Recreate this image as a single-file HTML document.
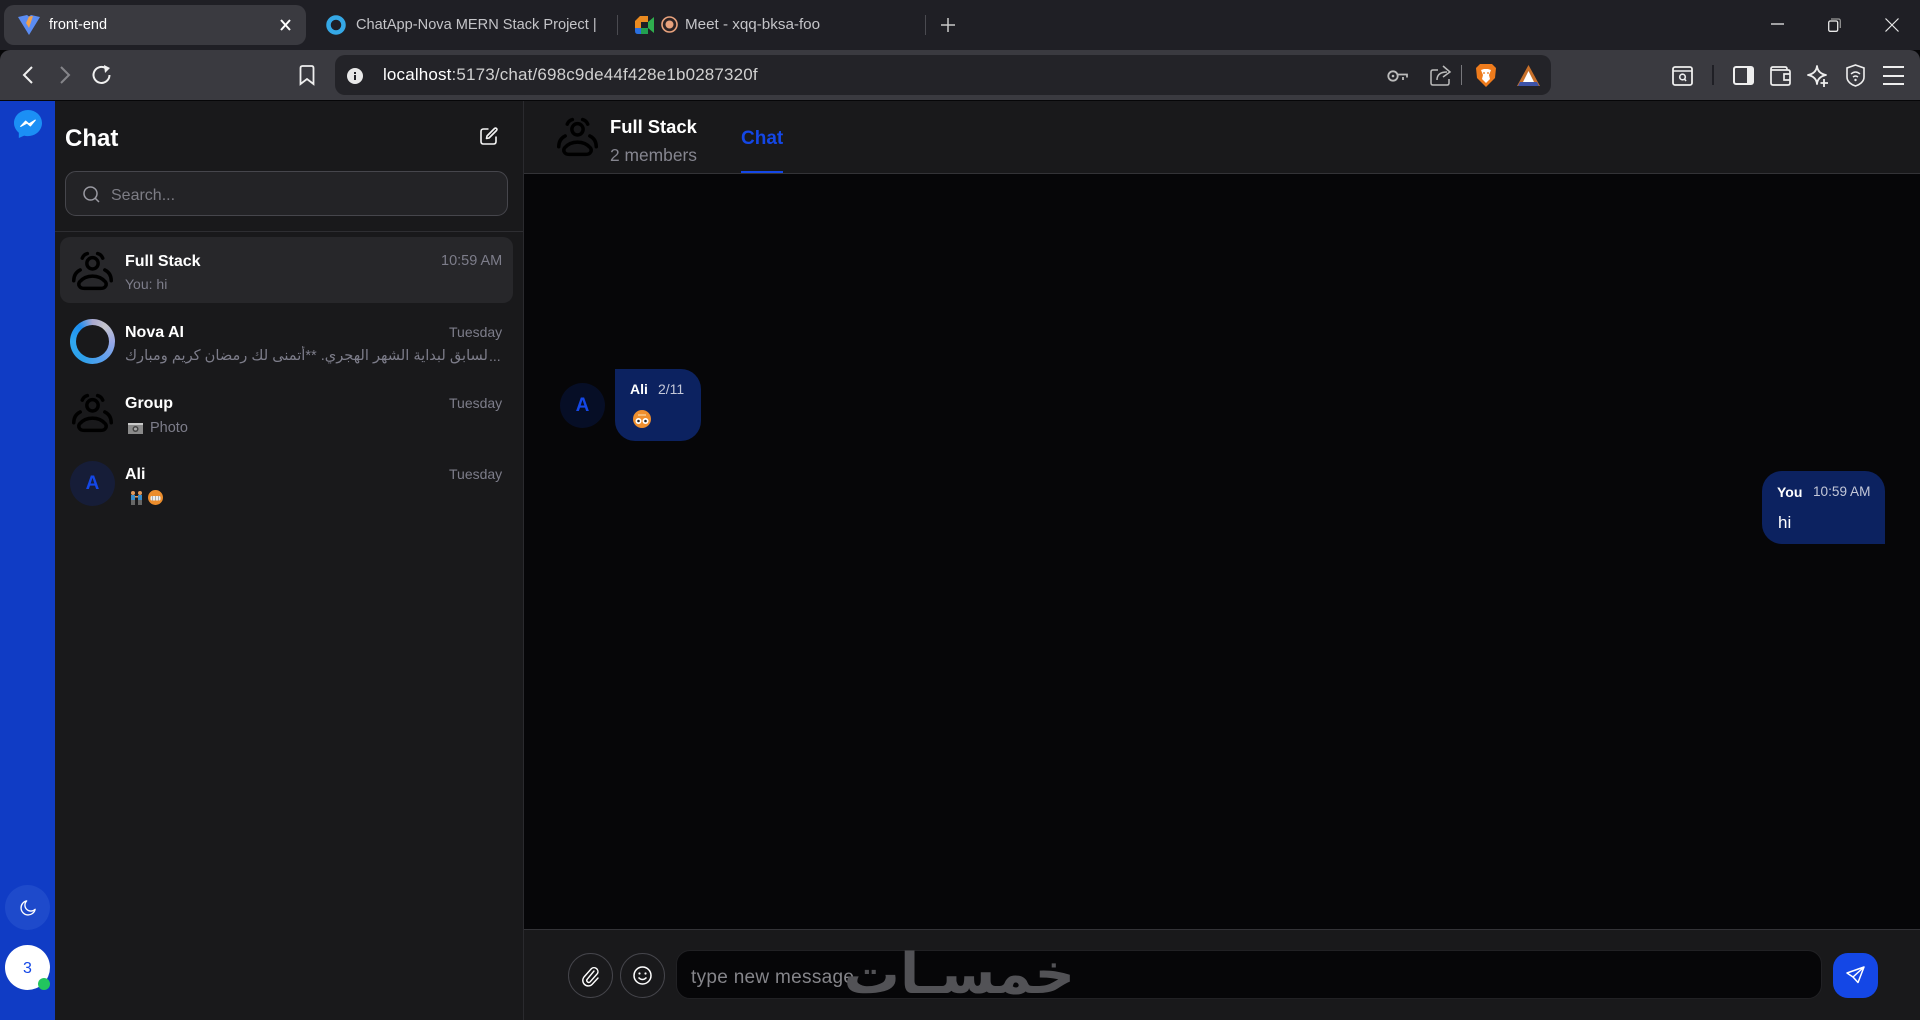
<!DOCTYPE html>
<html><head><meta charset="utf-8"><title>front-end</title>
<style>
*{box-sizing:border-box;margin:0;padding:0}
html,body{width:1920px;height:1020px;overflow:hidden;background:#060608;font-family:"Liberation Sans","DejaVu Sans",sans-serif;color:#fff}
.a{position:absolute}
.t{position:absolute;white-space:nowrap;line-height:20px;height:20px}
svg{position:absolute;overflow:visible}
.b{font-weight:700;color:#fff}
.g{color:#7d7d8a;font-size:14px}
</style></head><body>
<!-- browser chrome -->
<div class="a" style="left:0;top:0;width:1920px;height:50px;background:#1f1f25"></div>
<div class="a" style="left:4px;top:5px;width:302px;height:40px;background:#3a3a40;border-radius:10px"></div>
<div class="a" style="left:0;top:50px;width:1920px;height:50px;background:#3a3a40;border-radius:10px 10px 0 0"></div>
<div class="a" style="left:335px;top:55px;width:1216px;height:40px;background:#232328;border-radius:10px"></div>
<svg style="left:18px;top:15px" width="22" height="20" viewBox="0 0 22 20"><path d="M0 2 L9 0 L11 1.5 L13 0 L22 2 L11 20Z" fill="#5b8cf2"/><path d="M11 1.5 L15 1 L11 13 L8 8Z" fill="#f0a04b"/></svg>
<div class="t" style="left:49px;top:15px;font-size:14.5px;color:#fff">front-end</div>
<svg style="left:280px;top:19px" width="11" height="12" viewBox="0 0 11 12"><path d="M1 1L10 11M10 1L1 11" stroke="#fff" stroke-width="2"/></svg>
<svg style="left:326px;top:15px" width="20" height="20" viewBox="0 0 20 20"><circle cx="10" cy="10" r="7.5" fill="none" stroke="#35a8e6" stroke-width="4.5"/></svg>
<div class="t" style="left:356px;top:15px;width:241px;overflow:hidden;font-size:14.6px;color:#c4c4c8">ChatApp-Nova MERN Stack Project |</div>
<div class="a" style="left:617px;top:15px;width:1px;height:20px;background:#4a4a50"></div>
<svg style="left:635px;top:15px" width="19" height="20" viewBox="0 0 19 20"><path d="M0 6L5 1H13V7H6V13H0Z" fill="#ea8a20"/><path d="M0 13H6V19H3Q0 19 0 16Z" fill="#2a6fe0"/><path d="M6 13H13V19H6Z" fill="#22a050"/><path d="M13 7L19 2V18L13 13Z" fill="#2fae4e"/></svg>
<svg style="left:661px;top:16px" width="17" height="17" viewBox="0 0 17 17"><circle cx="8.5" cy="8.5" r="7.5" fill="#2b2224" stroke="#e8a27d" stroke-width="1.6"/><circle cx="8.5" cy="8.5" r="4" fill="#e8a27d"/></svg>
<div class="t" style="left:685px;top:15px;font-size:15.2px;color:#c4c4c8">Meet - xqq-bksa-foo</div>
<div class="a" style="left:925px;top:15px;width:1px;height:20px;background:#4a4a50"></div>
<svg style="left:941px;top:18px" width="14" height="14" viewBox="0 0 14 14"><path d="M7 0V14M0 7H14" stroke="#c8c8c8" stroke-width="1.5"/></svg>
<svg style="left:1771px;top:23px" width="13" height="2"><path d="M0 1H13" stroke="#e8e8e8" stroke-width="1.3"/></svg>
<svg style="left:1828px;top:18px" width="13" height="14" viewBox="0 0 13 14"><rect x=".7" y="3" width="9" height="10.3" rx="1.5" fill="none" stroke="#e8e8e8" stroke-width="1.3"/><path d="M3 1H10.5Q12.3 1 12.3 3V10" fill="none" stroke="#999" stroke-width="1.2"/></svg>
<svg style="left:1885px;top:18px" width="14" height="14" viewBox="0 0 14 14"><path d="M.5.5L13.5 13.5M13.5.5L.5 13.5" stroke="#e8e8e8" stroke-width="1.2"/></svg>
<svg style="left:22px;top:66px" width="11" height="18" viewBox="0 0 11 18"><path d="M10 1L2 9L10 17" fill="none" stroke="#f0f0f0" stroke-width="2"/></svg>
<svg style="left:60px;top:66px" width="11" height="18" viewBox="0 0 11 18"><path d="M1 1L9 9L1 17" fill="none" stroke="#85858a" stroke-width="2"/></svg>
<svg style="left:92px;top:65px" width="21" height="20" viewBox="0 0 21 20"><path d="M17.5 10a8 8 0 1 1-4-7" fill="none" stroke="#f0f0f0" stroke-width="2"/><path d="M12 0L18 3L13 8Z" fill="#f0f0f0"/></svg>
<svg style="left:299px;top:65px" width="16" height="20" viewBox="0 0 16 20"><path d="M1.5 3Q1.5 1 3.5 1H12.500Q14.500 1 14.500 3V19L8 14L1.500 19Z" fill="none" stroke="#efefef" stroke-width="1.800"/></svg>
<svg style="left:347px;top:68px" width="16" height="16" viewBox="0 0 16 16"><circle cx="8" cy="8" r="8" fill="#e8e8e8"/><rect x="7" y="7" width="2" height="5" fill="#232328"/><rect x="7" y="4" width="2" height="2" fill="#232328"/></svg>
<div class="t" style="left:383px;top:65px;font-size:17px;letter-spacing:.16px;color:#d0d0d0"><span style="color:#fff">localhost</span>:5173/chat/698c9de44f428e1b0287320f</div>
<svg style="left:1387px;top:69px" width="21" height="14" viewBox="0 0 21 14"><circle cx="6" cy="7" r="4.700" fill="none" stroke="#bbb" stroke-width="1.800"/><circle cx="6" cy="7" r="1.300" fill="#bbb"/><path d="M11 5.500H20V8.500M16 8V11" fill="none" stroke="#bbb" stroke-width="1.800"/></svg>
<svg style="left:1430px;top:65px" width="22" height="21" viewBox="0 0 22 21"><path d="M8 5H3Q1 5 1 7V18Q1 20 3 20H17Q19 20 19 18V14" fill="none" stroke="#bbb" stroke-width="1.500"/><path d="M7 15C7 9 11 7 17 7M13 1L20 7L13 12" fill="none" stroke="#bbb" stroke-width="1.500"/></svg>
<div class="a" style="left:1461px;top:65px;width:1px;height:20px;background:#77777c"></div>
<svg style="left:1476px;top:64px" width="20" height="23" viewBox="0 0 20 23"><path d="M4 0H16L20 4L19 14L10 23L1 14L0 4Z" fill="#ee7b1c"/><path d="M5 6L8 5H12L15 6L13 11L14 15L10 19L6 15L7 11Z" fill="#fff"/><path d="M7 9H9M11 9H13" stroke="#ee7b1c" stroke-width="1.200"/></svg>
<svg style="left:1517px;top:65px" width="23" height="21" viewBox="0 0 23 21"><path d="M11.500 0L23 21H0Z" fill="#c8702a"/><path d="M11.500 6L17 17H6Z" fill="#fff"/><path d="M3 17H20L22 21H1Z" fill="#3d53a8"/></svg>
<svg style="left:1672px;top:66px" width="21" height="20" viewBox="0 0 21 20"><rect x="1" y="1" width="19" height="18" rx="2" fill="none" stroke="#eee" stroke-width="1.800"/><path d="M1 5H20" stroke="#eee" stroke-width="1.500"/><circle cx="10.500" cy="11" r="2.800" fill="none" stroke="#eee" stroke-width="1.600"/><path d="M12.500 13L14 15" stroke="#eee" stroke-width="1.600"/></svg>
<div class="a" style="left:1712px;top:65px;width:2px;height:20px;background:#1f1f25"></div>
<svg style="left:1733px;top:66px" width="21" height="19" viewBox="0 0 21 19"><rect x="1" y="1" width="19" height="17" rx="2" fill="none" stroke="#eee" stroke-width="2"/><rect x="14" y="1" width="6" height="17" fill="#eee"/></svg>
<svg style="left:1770px;top:66px" width="21" height="20" viewBox="0 0 21 20"><path d="M17 4V3Q17 1 15 1H3Q1 1 1 3V17Q1 19 3 19H18Q20 19 20 17V6Q20 4 18 4H1" fill="none" stroke="#eee" stroke-width="1.700"/><path d="M20 8H14V14H20" fill="none" stroke="#eee" stroke-width="1.700"/></svg>
<svg style="left:1807px;top:65px" width="22" height="22" viewBox="0 0 22 22"><path d="M10 1C10.500 6 14 9 19 10C14 11 10.500 14 10 19C9.500 14 6 11 1 10C6 9 9.500 6 10 1Z" fill="none" stroke="#eee" stroke-width="1.800" stroke-linejoin="round"/><path d="M17 14V22M13.500 18H21" stroke="#eee" stroke-width="1.800"/></svg>
<svg style="left:1846px;top:64px" width="19" height="23" viewBox="0 0 19 23"><path d="M9.500 1L18 4V13C18 18 13 21 9.500 22C6 21 1 18 1 13V4Z" fill="none" stroke="#eee" stroke-width="1.600"/><path d="M5 10Q9.500 6 14 10M7 13Q9.500 11 12 13" fill="none" stroke="#eee" stroke-width="1.500"/><circle cx="9.500" cy="16" r="1.200" fill="#eee"/></svg>
<svg style="left:1883px;top:66px" width="21" height="19" viewBox="0 0 21 19"><path d="M0 1H21M0 10H21M0 18H21" stroke="#eee" stroke-width="2"/></svg>

<!-- left blue rail -->
<div class="a" style="left:0;top:101px;width:55px;height:919px;background:#103cc5"></div>
<svg style="left:14px;top:110px" width="28" height="28" viewBox="0 0 29 29"><path d="M14.500 0C6.500 0 0 6 0 13.500C0 17.500 2 21 5 23.500V29L10.500 26.500C11.800 26.800 13 27 14.500 27C22.500 27 29 21 29 13.500S22.500 0 14.500 0Z" fill="#1b8ff5"/><path d="M7 17L12 11.500L15.500 14.500L22 10.500L17 16.500L13.500 13.500Z" fill="#fff" stroke="#fff" stroke-width="1.200" stroke-linejoin="round"/></svg>
<div class="a" style="left:5px;top:885px;width:45px;height:45px;border-radius:50%;background:#1e4acb"></div>
<svg style="left:20px;top:900px" width="16" height="16" viewBox="0 0 18 18"><path d="M7.500 1A8 8 0 1 0 17 10.500A6.500 6.500 0 0 1 7.500 1Z" fill="none" stroke="#fff" stroke-width="1.500" stroke-linejoin="round"/></svg>
<div class="a" style="left:5px;top:945px;width:45px;height:45px;border-radius:50%;background:#fff"></div>
<div class="t" style="left:5px;width:45px;text-align:center;top:959px;font-size:16px;color:#1447e6">3</div>
<div class="a" style="left:38px;top:978px;width:12px;height:12px;border-radius:50%;background:#22c55e"></div>

<!-- chat list panel -->
<div class="a" style="left:55px;top:101px;width:469px;height:919px;background:#19191b;border-right:1px solid #2a2a2e"></div>
<div class="t" style="left:65px;top:127px;height:24px;line-height:24px;font-size:24px;font-weight:700;color:#fff">Chat</div>
<svg style="left:480px;top:127px" width="18" height="18" viewBox="0 0 18 18"><path d="M8.500 2H3.500Q1 2 1 4.500V14.500Q1 17 3.500 17H13.500Q16 17 16 14.500V9.500" fill="none" stroke="#f4f4f4" stroke-width="1.600"/><path d="M7 9L14.500 1.500Q15.500.7 16.500 1.500T16.500 3.500L9 11L6.500 11.500Z" fill="none" stroke="#f4f4f4" stroke-width="1.600" stroke-linejoin="round"/></svg>
<div class="a" style="left:65px;top:171px;width:443px;height:45px;border-radius:11px;background:#232326;border:1px solid #46464c"></div>
<svg style="left:83px;top:186px" width="17" height="17" viewBox="0 0 17 17"><circle cx="7.500" cy="7.500" r="6.500" fill="none" stroke="#9a9aa2" stroke-width="1.500"/><path d="M12.300 12.300L16 16" stroke="#9a9aa2" stroke-width="1.500"/></svg>
<div class="t" style="left:111px;top:186px;font-size:16px;color:#7d7d85">Search...</div>
<div class="a" style="left:55px;top:231px;width:468px;height:1px;background:#2e2e32"></div>
<div class="a" style="left:60px;top:237px;width:453px;height:66px;border-radius:10px;background:#27272a"></div>

<!-- row 1 -->
<svg style="left:72px;top:252px" width="41" height="38" viewBox="0 0 40 37"><g fill="none" stroke="#000" stroke-width="3.400" stroke-linecap="round"><circle cx="20" cy="11" r="5.500"/><path d="M12 35.500H28C33 35.500 34.500 31.500 32.500 29C29 25 24 23.500 20 23.500S11 25 7.500 29C5.500 31.500 7 35.500 12 35.500Z"/><path d="M10 6C11 3.500 13 2 15 1.500M30 6C29 3.500 27 2 25 1.500M1.700 28C1.700 23 4 19.500 8 17.500M38.300 28C38.300 23 36 19.500 32 17.500"/></g></svg>
<div class="t b" style="left:125px;top:252px;font-size:16px">Full Stack</div>
<div class="t g" style="left:441px;top:251px;font-size:14.500px">10:59 AM</div>
<div class="t g" style="left:125px;top:274px">You: hi</div>
<!-- row 2 -->
<div class="a" style="left:70px;top:319px;width:45px;height:45px;border-radius:50%;background:conic-gradient(from 0deg,#a9a8d0 0deg,#c6c6cc 40deg,#9aa8e6 90deg,#5aa0ee 150deg,#2da0ea 210deg,#30a8f0 270deg,#1c8ef0 320deg,#a9a8d0 360deg)"></div>
<div class="a" style="left:76px;top:325px;width:33px;height:33px;border-radius:50%;background:#19191b"></div>
<div class="t b" style="left:125px;top:323px;font-size:16px">Nova AI</div>
<div class="t g" style="left:449px;top:322px">Tuesday</div>
<div class="t g" dir="rtl" style="left:125px;top:346px;width:364px;font-size:14.6px;text-align:left;overflow:hidden">لسابق لبداية الشهر الهجري. **أتمنى لك رمضان كريم ومبارك</div>
<div class="t g" style="left:489px;top:346px">...</div>
<!-- row 3 -->
<svg style="left:72px;top:394px" width="41" height="38" viewBox="0 0 40 37"><g fill="none" stroke="#000" stroke-width="3.400" stroke-linecap="round"><circle cx="20" cy="11" r="5.500"/><path d="M12 35.500H28C33 35.500 34.500 31.500 32.500 29C29 25 24 23.500 20 23.500S11 25 7.500 29C5.500 31.500 7 35.500 12 35.500Z"/><path d="M10 6C11 3.500 13 2 15 1.500M30 6C29 3.500 27 2 25 1.500M1.700 28C1.700 23 4 19.500 8 17.500M38.300 28C38.300 23 36 19.500 32 17.500"/></g></svg>
<div class="t b" style="left:125px;top:394px;font-size:16px">Group</div>
<div class="t g" style="left:449px;top:393px">Tuesday</div>
<svg style="left:128px;top:423px" width="15" height="11" viewBox="0 0 15 11"><rect width="15" height="11" fill="#8a8a8a"/><rect y="0" width="15" height="2" fill="#c9c9c9"/><circle cx="7.500" cy="6" r="3" fill="#444"/><circle cx="7.500" cy="6" r="1.500" fill="#aaa"/></svg>
<div class="t g" style="left:150px;top:418px;font-size:14.500px">Photo</div>
<!-- row 4 -->
<div class="a" style="left:70px;top:461px;width:45px;height:45px;border-radius:50%;background:#161d38"></div>
<div class="t" style="left:70px;width:45px;text-align:center;top:474px;font-size:19px;font-weight:700;color:#1447e6">A</div>
<div class="t b" style="left:125px;top:465px;font-size:16px">Ali</div>
<div class="t g" style="left:449px;top:464px">Tuesday</div>
<svg style="left:130px;top:491px" width="13" height="14" viewBox="0 0 13 14"><circle cx="3" cy="2" r="2" fill="#e29a5a"/><circle cx="10" cy="2" r="2" fill="#e29a5a"/><rect x="1" y="4" width="4" height="5" fill="#3a8cc8"/><rect x="8" y="4" width="4" height="5" fill="#3a8cc8"/><rect x="1" y="9" width="4" height="5" fill="#666"/><rect x="8" y="9" width="4" height="5" fill="#666"/><rect x="5" y="5" width="3" height="1.500" fill="#e29a5a"/></svg>
<svg style="left:148px;top:490px" width="15" height="15" viewBox="0 0 15 15"><circle cx="7.500" cy="7.500" r="7.500" fill="#ec8d2c"/><rect x="2.500" y="6" width="10" height="4.500" rx="1.500" fill="#eee"/><path d="M4.500 6V10.500M7.500 6V10.500M10.500 6V10.500" stroke="#888" stroke-width=".6"/></svg>

<!-- main header -->
<div class="a" style="left:524px;top:101px;width:1396px;height:73px;background:#19191b;border-bottom:1px solid #333337"></div>
<svg style="left:557px;top:118px" width="41" height="38" viewBox="0 0 40 37"><g fill="none" stroke="#000" stroke-width="3.400" stroke-linecap="round"><circle cx="20" cy="11" r="5.500"/><path d="M12 35.500H28C33 35.500 34.500 31.500 32.500 29C29 25 24 23.500 20 23.500S11 25 7.500 29C5.500 31.500 7 35.500 12 35.500Z"/><path d="M10 6C11 3.500 13 2 15 1.500M30 6C29 3.500 27 2 25 1.500M1.700 28C1.700 23 4 19.500 8 17.500M38.300 28C38.300 23 36 19.500 32 17.500"/></g></svg>
<div class="t b" style="left:610px;top:117px;font-size:18.400px">Full Stack</div>
<div class="t" style="left:610px;top:145px;font-size:17.400px;color:#85858f">2 members</div>
<div class="t" style="left:741px;top:129px;font-size:19px;font-weight:700;color:#1447e6">Chat</div>
<div class="a" style="left:741px;top:171px;width:42px;height:2px;background:#1447e6"></div>

<!-- messages -->
<div class="a" style="left:560px;top:383px;width:45px;height:45px;border-radius:50%;background:#060e26"></div>
<div class="t" style="left:560px;width:45px;text-align:center;top:396px;font-size:19px;font-weight:700;color:#1447e6">A</div>
<div class="a" style="left:615px;top:369px;width:86px;height:72px;background:#0c2260;border-radius:0 20px 20px 20px"></div>
<div class="t" style="left:630px;top:379px;font-size:14px;font-weight:700;color:#fff">Ali</div>
<div class="t" style="left:658px;top:379px;font-size:14px;color:#c4c8d8">2/11</div>
<svg style="left:633px;top:410px" width="18" height="18" viewBox="0 0 18 18"><circle cx="9" cy="9" r="9" fill="#ef8f2e"/><circle cx="5.500" cy="11" r="3" fill="#fff"/><circle cx="12.500" cy="11" r="3" fill="#fff"/><circle cx="5.500" cy="11" r="1.300" fill="#222"/><circle cx="12.500" cy="11" r="1.300" fill="#222"/><path d="M5 5H13" stroke="#f9c88a" stroke-width="1.500"/></svg>
<div class="a" style="left:1762px;top:471px;width:123px;height:73px;background:#0c2260;border-radius:20px 20px 0 20px"></div>
<div class="t" style="left:1777px;top:482px;font-size:14px;font-weight:700;color:#fff">You</div>
<div class="t" style="left:1813px;top:482px;font-size:13.600px;color:#c4c8d8">10:59 AM</div>
<div class="t" style="left:1778px;top:513px;font-size:17px;color:#fff">hi</div>

<!-- composer -->
<div class="a" style="left:524px;top:929px;width:1396px;height:91px;background:#19191b;border-top:1px solid #333337"></div>
<div class="a" style="left:568px;top:953px;width:45px;height:45px;border-radius:50%;border:1px solid #45454b"></div>
<svg style="left:581px;top:966px" width="19" height="20" viewBox="0 0 19 20"><path d="M13 5L6 13.500A2 2 0 0 0 9 16L16.500 7.500A4 4 0 0 0 10.500 2.500L3 11A5.500 5.500 0 0 0 11 18.500L17 12" fill="none" stroke="#fff" stroke-width="1.400" stroke-linecap="round"/></svg>
<div class="a" style="left:620px;top:953px;width:45px;height:45px;border-radius:50%;border:1px solid #45454b"></div>
<svg style="left:633px;top:966px" width="19" height="19" viewBox="0 0 19 19"><circle cx="9.500" cy="9.500" r="8.500" fill="none" stroke="#fff" stroke-width="1.500"/><circle cx="6.500" cy="7.500" r="1.100" fill="#fff"/><circle cx="12.500" cy="7.500" r="1.100" fill="#fff"/><path d="M5.500 11.500Q9.500 15.500 13.500 11.500" fill="none" stroke="#fff" stroke-width="1.500"/></svg>
<div class="a" style="left:676px;top:950px;width:1146px;height:49px;border-radius:14px;background:#060608;border:1px solid #212124"></div>
<div class="t" style="left:691px;top:968px;font-size:19px;letter-spacing:.3px;color:#85858a">type new message</div>
<div class="a" style="left:1833px;top:953px;width:45px;height:45px;border-radius:15px;background:#1447e6"></div>
<svg style="left:1846px;top:966px" width="19" height="19" viewBox="0 0 19 19"><path d="M18 1L1 7L7 11L12 16.500Z M18 1L7 11" fill="none" stroke="#fff" stroke-width="1.500" stroke-linejoin="round"/></svg>
<div class="t" dir="rtl" style="left:845px;top:944px;width:230px;height:60px;line-height:60px;font-size:56px;font-weight:700;color:#525256;text-align:center">خمسـات</div>
</body></html>
